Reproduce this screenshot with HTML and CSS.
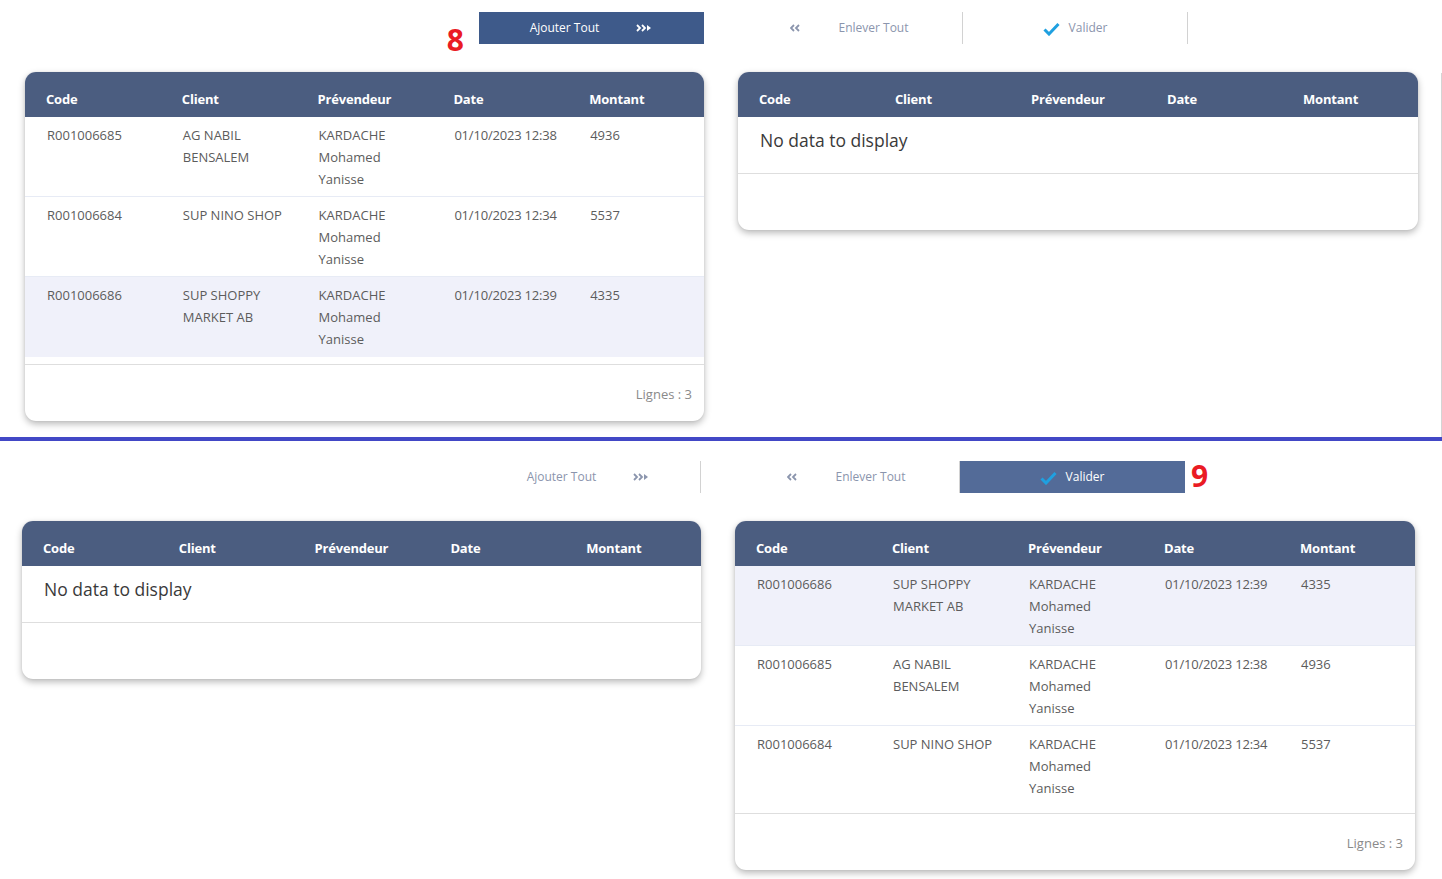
FILE: index.html
```html
<!DOCTYPE html>
<html lang="fr">
<head>
<meta charset="utf-8">
<title>Transfert</title>
<link rel="stylesheet" href="styles.css">
</head>
<body>
<div class="pane pane-top">
  <div class="board">
    <div class="toolbar">
      <div class="tb-left">
        <div class="tb-btn tb-sep active">
          <span class="marker marker-8">8</span>
          <span class="tb-label">Ajouter Tout</span>
          <svg class="ic-right" width="16" height="8" viewBox="0 0 16 8"><polyline points="1,1 4,4 1,7" fill="none" stroke="currentColor" stroke-width="1.8"/><polyline points="6,1 9,4 6,7" fill="none" stroke="currentColor" stroke-width="1.8"/><polygon points="11,1 15,4 11,7" fill="currentColor"/></svg>
        </div>
      </div>
      <div class="tb-right">
        <div class="tb-btn tb-enlever">
          <svg class="ic-left" width="10" height="8" viewBox="0 0 10 8"><polyline points="4,1 1,4 4,7" fill="none" stroke="currentColor" stroke-width="1.8"/><polyline points="9,1 6,4 9,7" fill="none" stroke="currentColor" stroke-width="1.8"/></svg>
          <span class="tb-label">Enlever Tout</span>
        </div>
        <div class="tb-btn tb-valider">
          <svg class="ic-check" width="17" height="14" viewBox="0 0 17 14"><path d="M1.5 7.5 L6 12 L15.5 2" fill="none" stroke="#1fa0e0" stroke-width="3"/></svg>
          <span class="tb-label">Valider</span>
        </div>
      </div>
    </div>
    <div class="tables">
      <div class="card">
        <table class="grid">
          <thead><tr><th>Code</th><th>Client</th><th>Prévendeur</th><th>Date</th><th>Montant</th></tr></thead>
          <tbody>
            <tr><td>R001006685</td><td>AG NABIL BENSALEM</td><td>KARDACHE Mohamed Yanisse</td><td class="nw">01/10/2023 12:38</td><td>4936</td></tr>
            <tr><td>R001006684</td><td>SUP NINO SHOP</td><td>KARDACHE Mohamed Yanisse</td><td class="nw">01/10/2023 12:34</td><td>5537</td></tr>
            <tr class="hl"><td>R001006686</td><td>SUP SHOPPY MARKET AB</td><td>KARDACHE Mohamed Yanisse</td><td class="nw">01/10/2023 12:39</td><td>4335</td></tr>
          </tbody>
        </table>
        <div class="body-pad"></div>
        <div class="card-foot">Lignes : 3</div>
      </div>
      <div class="card">
        <table class="grid">
          <thead><tr><th>Code</th><th>Client</th><th>Prévendeur</th><th>Date</th><th>Montant</th></tr></thead>
        </table>
        <div class="nodata">No data to display</div>
        <div class="card-foot"></div>
      </div>
    </div>
  </div>
</div>
<div class="divider"></div>
<div class="pane pane-bottom">
  <div class="board">
    <div class="toolbar">
      <div class="tb-left">
        <div class="tb-btn tb-sep">
          <span class="tb-label">Ajouter Tout</span>
          <svg class="ic-right" width="16" height="8" viewBox="0 0 16 8"><polyline points="1,1 4,4 1,7" fill="none" stroke="currentColor" stroke-width="1.8"/><polyline points="6,1 9,4 6,7" fill="none" stroke="currentColor" stroke-width="1.8"/><polygon points="11,1 15,4 11,7" fill="currentColor"/></svg>
        </div>
      </div>
      <div class="tb-right">
        <div class="tb-btn tb-enlever">
          <svg class="ic-left" width="10" height="8" viewBox="0 0 10 8"><polyline points="4,1 1,4 4,7" fill="none" stroke="currentColor" stroke-width="1.8"/><polyline points="9,1 6,4 9,7" fill="none" stroke="currentColor" stroke-width="1.8"/></svg>
          <span class="tb-label">Enlever Tout</span>
        </div>
        <div class="tb-btn tb-valider active-alt">
          <svg class="ic-check" width="17" height="14" viewBox="0 0 17 14"><path d="M1.5 7.5 L6 12 L15.5 2" fill="none" stroke="#1fa0e0" stroke-width="3"/></svg>
          <span class="tb-label">Valider</span>
          <span class="marker marker-9">9</span>
        </div>
      </div>
    </div>
    <div class="tables">
      <div class="card">
        <table class="grid">
          <thead><tr><th>Code</th><th>Client</th><th>Prévendeur</th><th>Date</th><th>Montant</th></tr></thead>
        </table>
        <div class="nodata">No data to display</div>
        <div class="card-foot"></div>
      </div>
      <div class="card">
        <table class="grid">
          <thead><tr><th>Code</th><th>Client</th><th>Prévendeur</th><th>Date</th><th>Montant</th></tr></thead>
          <tbody>
            <tr class="hl"><td>R001006686</td><td>SUP SHOPPY MARKET AB</td><td>KARDACHE Mohamed Yanisse</td><td class="nw">01/10/2023 12:39</td><td>4335</td></tr>
            <tr><td>R001006685</td><td>AG NABIL BENSALEM</td><td>KARDACHE Mohamed Yanisse</td><td class="nw">01/10/2023 12:38</td><td>4936</td></tr>
            <tr><td>R001006684</td><td>SUP NINO SHOP</td><td>KARDACHE Mohamed Yanisse</td><td class="nw">01/10/2023 12:34</td><td>5537</td></tr>
          </tbody>
        </table>
        <div class="body-pad"></div>
        <div class="card-foot">Lignes : 3</div>
      </div>
    </div>
  </div>
</div>
</body>
</html>
```

FILE: styles.css
```css
* { box-sizing: border-box; }
html, body { margin: 0; padding: 0; background: #ffffff; }
body {
  font-family: "Open Sans", "Noto Sans", "Liberation Sans", sans-serif;
  color: #5a5a5a;
  width: 1442px;
  height: 879px;
  overflow: hidden;
}

.pane { position: relative; overflow: hidden; background: #fff; }
.pane-top { height: 437px; padding: 12px 0 0 25px; }
.pane-top::after {
  content: "";
  position: absolute;
  right: 0; top: 73px; bottom: 0;
  width: 1px;
  background: #d4d4d4;
}
.pane-bottom { height: 438px; padding: 20px 0 0 22px; }
.divider { height: 4px; background: #4248c6; }

.board { width: 1393px; }

.toolbar {
  display: grid;
  grid-template-columns: 679px 680px;
  column-gap: 34px;
  height: 32px;
}
.tb-left { display: flex; justify-content: flex-end; }
.tb-right { display: flex; }

.tb-btn {
  position: relative;
  display: flex;
  align-items: center;
  justify-content: center;
  width: 225px;
  height: 32px;
  font-size: 12px;
  color: #8b95ad;
  gap: 37px;
}
.tb-sep { border-right: 1px solid #d2d2d2; }
.tb-enlever { width: 225px; gap: 38px; margin-left: -1px; }
.tb-valider {
  width: 226px;
  gap: 9px;
  border-left: 1px solid #d2d2d2;
  border-right: 1px solid #d2d2d2;
}
.tb-btn.active { background: #3e5a8a; color: #ffffff; border-color: #3e5a8a; }
.tb-btn.active-alt { background: #536b98; color: #ffffff; border-right-color: #536b98; }
.tb-label { line-height: 16px; }
.ic-right, .ic-left { display: block; }
.ic-left { margin-top: -1px; }
.ic-check { display: block; margin-top: 2px; }

.marker {
  position: absolute;
  font-family: "Open Sans", "Liberation Sans", sans-serif;
  font-weight: 700;
  font-size: 30px;
  line-height: 30px;
  color: #ea1b24;
}
.marker-8 { right: 100%; margin-right: 15px; top: 13px; }
.marker-9 { left: 100%; margin-left: 7px; top: 0px; }

.tables {
  display: grid;
  grid-template-columns: 679px 680px;
  column-gap: 34px;
  margin-top: 28px;
  align-items: start;
}

.card {
  background: #fff;
  border-radius: 11px;
  overflow: hidden;
  box-shadow: 0 3px 7px rgba(0, 0, 0, 0.28), 0 0 2px rgba(0, 0, 0, 0.08);
}

.grid {
  width: 100%;
  border-collapse: separate;
  border-spacing: 0;
  table-layout: fixed;
}
.grid th {
  background: #4b5d80;
  color: #ffffff;
  font-weight: 700;
  font-size: 13px;
  text-align: left;
  vertical-align: top;
  line-height: 21px;
  height: 45px;
  padding: 17px 8px 0 21px;
  letter-spacing: -0.2px;
}
.grid td {
  font-size: 13px;
  line-height: 22px;
  color: #5c5c5c;
  vertical-align: top;
  height: 80px;
  padding: 7px 10px 0 22px;
  border-bottom: 1px solid #e7ebf5;
}
.grid tbody tr:last-child td { border-bottom: none; }
.grid td.nw { white-space: nowrap; padding-right: 0; letter-spacing: -0.2px; }
.grid tbody tr.hl td { background: #f0f1fa; }

.body-pad { height: 7px; }

.nodata {
  font-size: 17.5px;
  line-height: 24px;
  color: #3a3a3a;
  padding: 11px 0 21px 22px;
}

.card-foot {
  border-top: 1px solid #dedede;
  height: 57px;
  padding: 20px 12px 0 0;
  text-align: right;
  font-size: 13px;
  line-height: 18px;
  color: #8a8a8a;
}
```
